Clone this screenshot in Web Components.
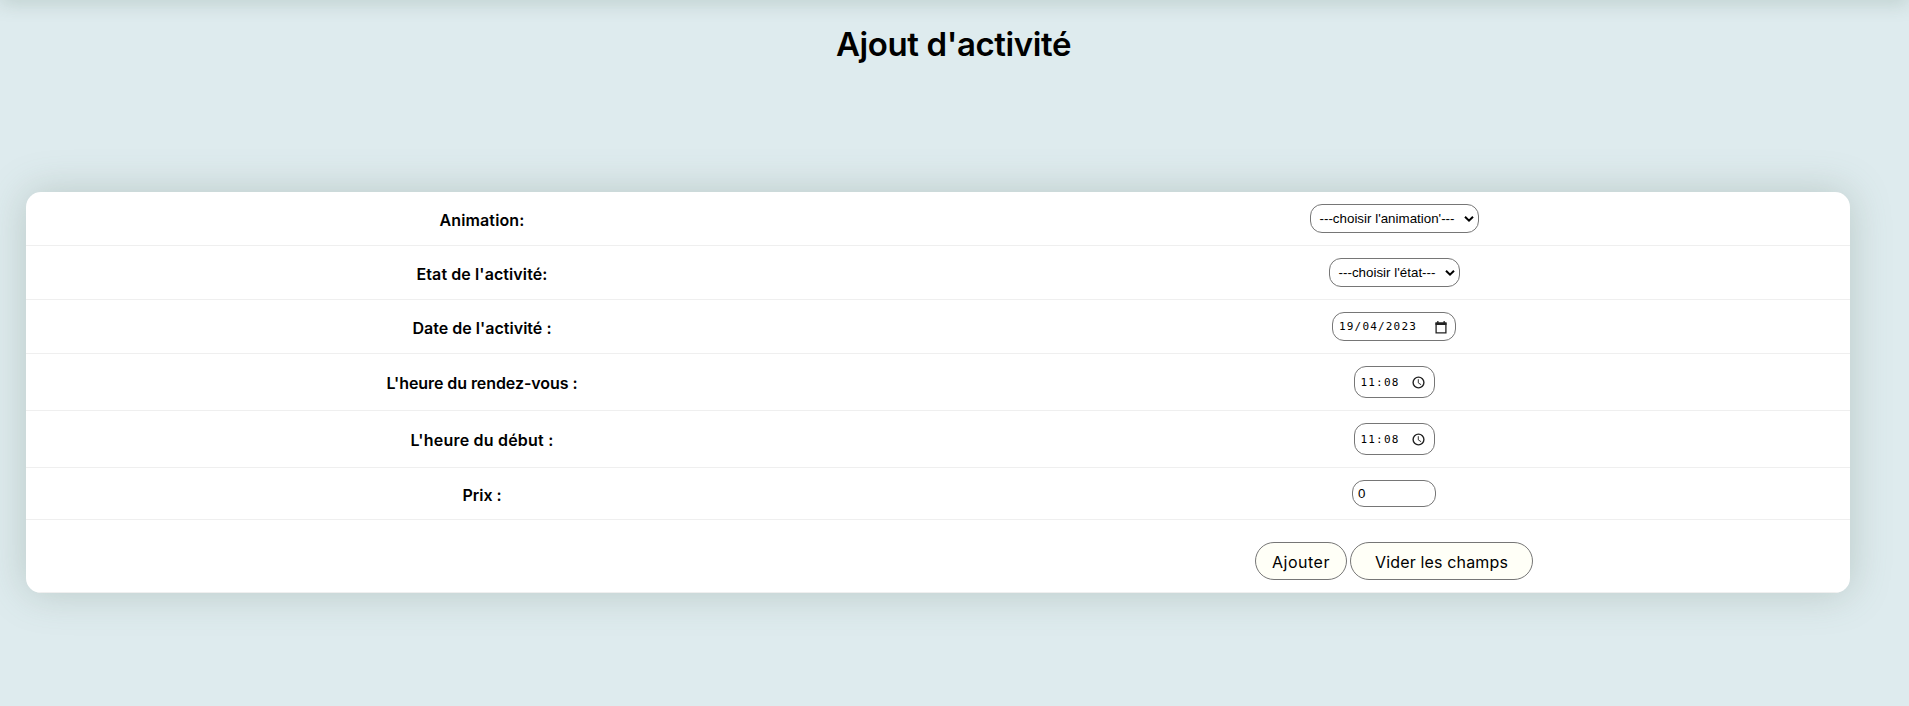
<!DOCTYPE html>
<html lang="fr">
<head>
<meta charset="utf-8">
<title>Ajout d'activité</title>
<style>
html,body{margin:0;height:100%;overflow:hidden}
body{background:#deebee;color:#000;font-family:Inter,"Liberation Sans",sans-serif}
</style>
</head>
<body>
<activity-page></activity-page>
<script>
const define=(name,html,ready)=>customElements.define(name,class extends HTMLElement{
  constructor(){super();this.attachShadow({mode:'open'}).innerHTML=html;}
  connectedCallback(){if(ready)ready(this);}
});

/* text run tracked to an exact advance width */
define('fit-text','<style>:host{display:inline-block;white-space:pre}</style><slot></slot>',el=>{
  const target=+el.getAttribute('w');
  const natural=el.getBoundingClientRect().width;
  const n=el.textContent.length;
  el.style.letterSpacing=((target-natural)/n)+'px';
});

define('form-row',`<style>
:host{display:grid;grid-template-columns:1fr 1fr;box-sizing:border-box;border-bottom:1px solid #efefef}
.label{display:flex;justify-content:center;align-items:center;font-weight:600;font-size:16px;line-height:20px;padding-top:2px}
.control{display:flex;justify-content:center;align-items:flex-start;padding-top:12px;gap:3px}
:host([last]) .control{padding-top:22px}
</style><div class="label"><slot name="label"></slot></div><div class="control"><slot></slot></div>`);

define('field-box',`<style>
:host{display:flex;box-sizing:border-box;justify-content:space-between;align-items:center;border:1px solid #767676;border-radius:12px;background:#fff;font:13.333px/16px "Liberation Sans",Arial,sans-serif}
svg{display:none;flex:none}
:host([kind=select]){height:29px;padding:0 4px 0 9px}
:host([kind=select]) .chev,:host([kind=date]) .cal,:host([kind=time]) .clock{display:block}
:host([kind=date]),:host([kind=time]){font:11px/16px "DejaVu Sans Mono",monospace}
:host([kind=date]){height:29px;padding:1px 8px 0 6px}
:host([kind=time]){height:32px;padding:0 9px 0 6px}
:host([kind=time]) .text{padding-top:2px}
:host([kind=number]){height:27px;padding:0 5px}
</style><span class="text"><slot></slot></span>
<svg class="chev" width="10" height="8" viewBox="0 0 10 8"><path d="M1 1.7 5 5.7 9 1.7" fill="none" stroke="#000" stroke-width="2"/></svg>
<svg class="cal" width="12" height="13" viewBox="0 0 12 13"><path d="M1.1 2.2h9.8v9.7H1.1z" fill="none" stroke="#222" stroke-width="1.3"/><path d="M.5 1.6h11v2.5H.5zM2.2 0h1.3v2H2.2zM8.5 0h1.3v2H8.5z" fill="#222"/></svg>
<svg class="clock" width="13" height="13" viewBox="0 0 13 13"><circle cx="6.5" cy="6.5" r="5.4" fill="none" stroke="#222" stroke-width="1.4"/><path d="M6.3 3.2v3.7l2.8 1.8" fill="none" stroke="#333" stroke-width="1"/></svg>`);

define('pill-button',`<style>
:host{display:block}
button{all:unset;display:flex;box-sizing:border-box;width:100%;height:38px;align-items:center;justify-content:center;border:1px solid #767676;border-radius:19px;background:#fffff7;color:#000;font-size:16px;line-height:20px;padding-top:2px}
</style><button type="button"><slot></slot></button>`);

define('activity-page',`<style>
:host{display:block;height:100vh;overflow:hidden}
.bar{height:10px;margin-top:-10px;box-shadow:0 0 20px rgba(100,130,115,.46)}
h1{margin:0;height:192px;box-sizing:border-box;padding:24px 2px 0 0;text-align:center;font-size:33px;line-height:40px;font-weight:600}
.card{width:1824px;margin-left:26px;border-radius:15px;overflow:hidden;background:#fff;box-shadow:0 0 40px rgba(90,110,95,.28)}
</style>
<div class="bar"></div>
<h1><fit-text w="235">Ajout d'activité</fit-text></h1>
<div class="card">
<form-row style="height:54px"><fit-text slot="label" w="85">Animation:</fit-text><field-box kind="select" style="width:169px"><fit-text w="135">---choisir l'animation'---</fit-text></field-box></form-row>
<form-row style="height:54px"><fit-text slot="label" w="131">Etat de l'activité:</fit-text><field-box kind="select" style="width:131px"><fit-text w="97">---choisir l'état---</fit-text></field-box></form-row>
<form-row style="height:54px"><fit-text slot="label" w="139">Date de l'activité :</fit-text><field-box kind="date" style="width:124px"><fit-text w="78">19/04/2023</fit-text></field-box></form-row>
<form-row style="height:57px"><fit-text slot="label" w="191">L'heure du rendez-vous :</fit-text><field-box kind="time" style="width:81px"><fit-text w="39">11:08</fit-text></field-box></form-row>
<form-row style="height:57px"><fit-text slot="label" w="143">L'heure du début :</fit-text><field-box kind="time" style="width:81px"><fit-text w="39">11:08</fit-text></field-box></form-row>
<form-row style="height:52px"><fit-text slot="label" w="39">Prix :</fit-text><field-box kind="number" style="width:84px"><fit-text w="7">0</fit-text></field-box></form-row>
<form-row last style="height:73px"><pill-button style="width:92px"><fit-text w="58">Ajouter</fit-text></pill-button><pill-button style="width:183px"><fit-text w="133">Vider les champs</fit-text></pill-button></form-row>
</div>`);
</script>
</body>
</html>
